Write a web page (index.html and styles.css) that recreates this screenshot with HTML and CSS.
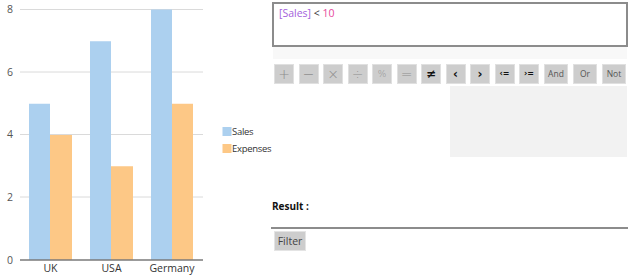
FILE: index.html
```html
<!DOCTYPE html>
<html>
<head>
<meta charset="utf-8">
<link rel="stylesheet" href="styles.css">
</head>
<body>
<div class="page">
  <svg class="chart" width="270" height="279" viewBox="0 0 270 279">
    <g class="grid">
      <line x1="20" y1="9.5" x2="203" y2="9.5"/>
      <line x1="20" y1="72" x2="203" y2="72"/>
      <line x1="20" y1="134.5" x2="203" y2="134.5"/>
      <line x1="20" y1="197" x2="203" y2="197"/>
    </g>
    <g class="ylab">
      <text x="10" y="13">8</text>
      <text x="10" y="75.5">6</text>
      <text x="10" y="138">4</text>
      <text x="10" y="200.5">2</text>
      <text x="10" y="263.5">0</text>
    </g>
    <g class="sales">
      <rect x="29" y="103.75" width="21" height="156.25"/>
      <rect x="90" y="41.25" width="21" height="218.75"/>
      <rect x="151" y="9.5" width="21" height="250.5"/>
    </g>
    <g class="exp">
      <rect x="50" y="135" width="22" height="125"/>
      <rect x="111" y="166.25" width="22" height="93.75"/>
      <rect x="172" y="103.75" width="21" height="156.25"/>
    </g>
    <line class="axis" x1="20" y1="260" x2="203" y2="260"/>
    <g class="xlab">
      <text x="50.5" y="272">UK</text>
      <text x="111.5" y="272">USA</text>
      <text x="172" y="272">Germany</text>
    </g>
    <rect class="sw-sales" x="222.5" y="127" width="9" height="9"/>
    <text class="leg" x="232" y="135">Sales</text>
    <rect class="sw-exp" x="222.5" y="144" width="9" height="9"/>
    <text class="leg" x="232" y="152">Expenses</text>
  </svg>
  <div class="panel">
    <div class="editor">
      <span class="field">[Sales]</span> <span class="op">&lt;</span> <span class="num">10</span>
    </div>
    <div class="band"></div>
    <div class="buttons">
      <button class="btn light">+</button>
      <button class="btn light">−</button>
      <button class="btn light">×</button>
      <button class="btn light">÷</button>
      <button class="btn light small">%</button>
      <button class="btn light">=</button>
      <button class="btn dark">≠</button>
      <button class="btn dark">‹</button>
      <button class="btn dark">›</button>
      <button class="btn dark small">‹=</button>
      <button class="btn dark small">›=</button>
      <button class="btn word">And</button>
      <button class="btn word">Or</button>
      <button class="btn word">Not</button>
    </div>
    <div class="suggest"></div>
    <div class="result">Result :</div>
    <div class="rule"></div>
    <button class="filter">Filter</button>
  </div>
</div>
</body>
</html>
```
FILE: styles.css
```css
html, body {
  margin: 0;
  padding: 0;
  background: #ffffff;
}
body {
  font-family: "Open Sans", "Noto Sans", sans-serif;
  width: 630px;
  height: 279px;
  overflow: hidden;
}
.page {
  display: flex;
  align-items: flex-start;
}
.chart {
  display: block;
  flex: none;
  overflow: visible;
}
.grid line {
  stroke: #dadada;
  stroke-width: 1;
}
.axis {
  stroke: #7a7a7a;
  stroke-width: 1.5;
}
.ylab text {
  font-size: 10.5px;
  fill: #555;
  text-anchor: middle;
}
.xlab text {
  font-size: 10.5px;
  fill: #333;
  text-anchor: middle;
}
.sales rect, .sw-sales {
  fill: #acd0ef;
}
.exp rect, .sw-exp {
  fill: #fdc886;
}
.leg {
  font-size: 9.5px;
  fill: #333;
  letter-spacing: -0.3px;
}
.panel {
  margin-left: 2px;
  padding-top: 2px;
  width: 356px;
  display: flex;
  flex-direction: column;
}
.editor {
  border: 2px solid #8c8c8c;
  padding: 2px 0 0 5px;
  box-sizing: border-box;
  height: 45px;
  font-size: 10.5px;
  line-height: 15px;
}
.field { color: #a45fdc; }
.op { color: #333; }
.num { color: #e6479c; }
.band {
  height: 12px;
  margin: 0 1px;
  background: #f8f8f8;
}
.buttons {
  display: flex;
  margin-top: 5px;
  margin-left: 2px;
  gap: 4.5px;
}
.btn {
  width: 20px;
  height: 20px;
  padding: 0;
  border: 1px solid #e0e0e0;
  background: #cdcdcd;
  font-family: "DejaVu Sans", sans-serif;
  font-size: 13px;
  line-height: 18px;
  text-align: center;
  box-sizing: border-box;
}
.btn.light { color: #8e8e8e; font-weight: 300; font-size: 14px; }
.btn.light.small { font-size: 9px; }
.btn.dark { color: #111; font-weight: bold; font-size: 12px; }
.btn.dark.small { font-size: 8px; }
.btn.word {
  width: 24px;
  margin-left: 0.5px;
  color: #555;
  font-family: "Open Sans", sans-serif;
  font-size: 8.5px;
}
.suggest {
  margin-top: 2px;
  margin-left: 178px;
  width: 177px;
  height: 71px;
  background: #f2f2f2;
}
.result {
  margin-top: 42px;
  font-size: 10px;
  font-weight: bold;
  color: #111;
  line-height: 14px;
}
.rule {
  margin-top: 14px;
  height: 2px;
  background: #8c8c8c;
  margin-left: -1px;
}
.filter {
  margin-top: 2px;
  margin-left: 2px;
  width: 32px;
  height: 20px;
  padding: 0;
  border: 1px solid #e4e4e4;
  background: #cdcdcd;
  color: #444;
  font-family: "Open Sans", sans-serif;
  font-size: 10.5px;
  box-sizing: border-box;
}
```
